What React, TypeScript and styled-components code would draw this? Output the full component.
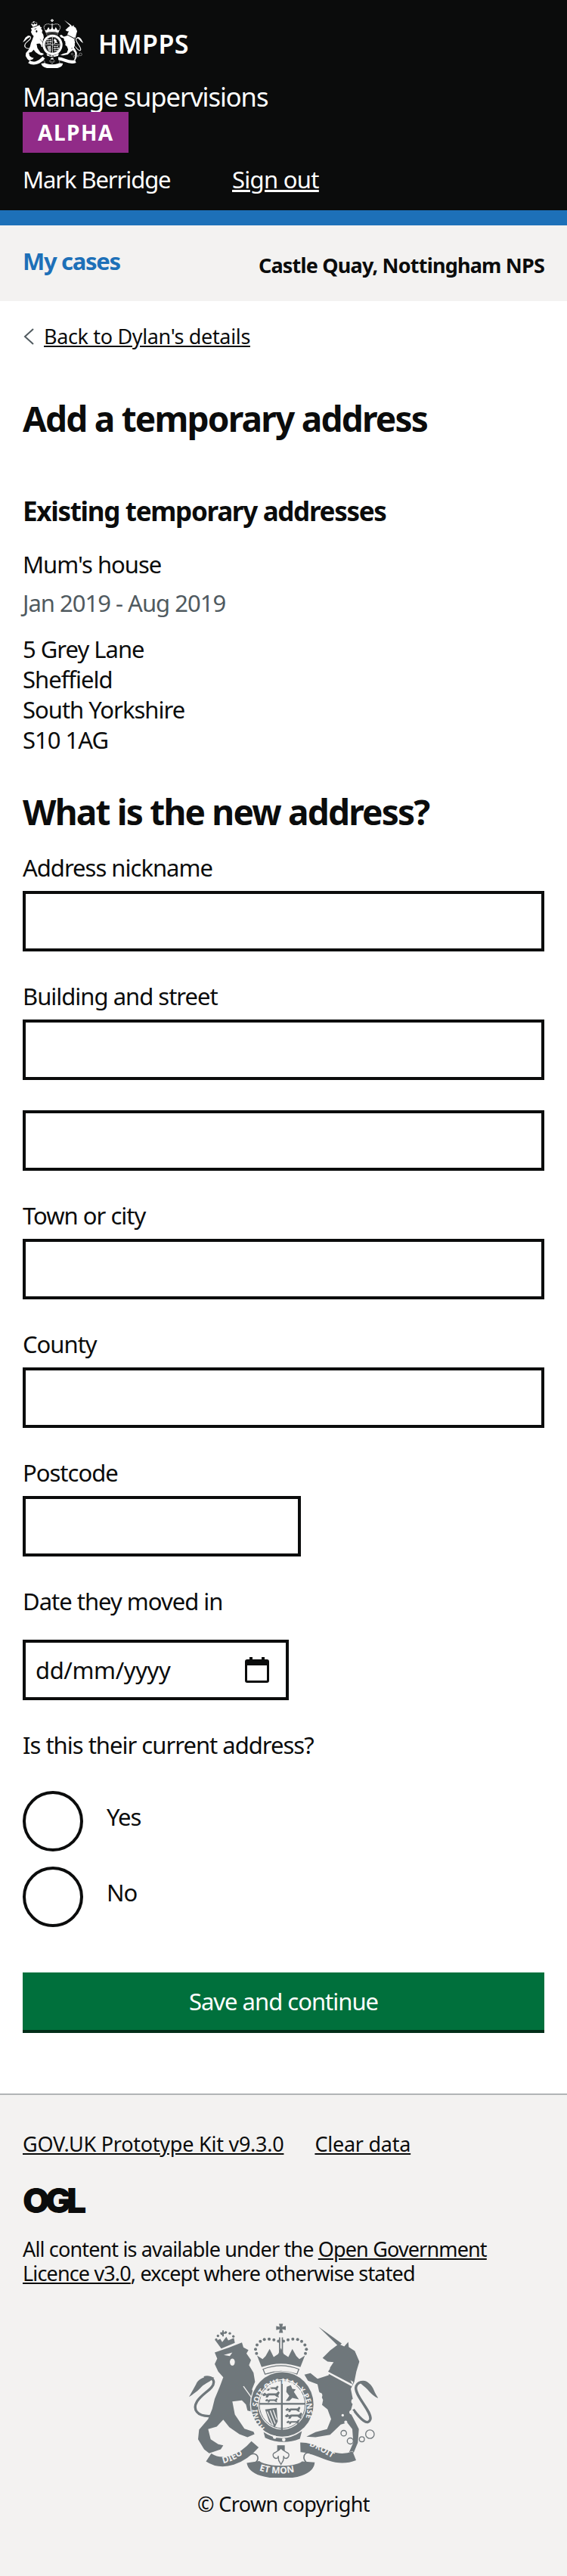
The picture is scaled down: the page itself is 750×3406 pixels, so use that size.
import React from "react";
import styled, { createGlobalStyle } from "styled-components";

const Global = createGlobalStyle`
  html, body { margin: 0; padding: 0; background: #fff; }
  body { font-family: "Noto Sans", "Liberation Sans", sans-serif; color: #0b0c0c; font-size: 31px; line-height: 40px; letter-spacing: -1px; }
  * { box-sizing: border-box; }
`;

const Page = styled.div`
  width: 750px;
  min-height: 3406px;
  display: flex;
  flex-direction: column;
`;

const Header = styled.header`
  background: #0b0c0c;
  color: #fff;
  border-bottom: 20px solid #1d70b8;
  padding: 25px 30px 21px;
`;
const LogoRow = styled.div`
  display: flex;
  align-items: center;
  gap: 20px;
  height: 65px;
`;
const Brand = styled.span`
  font-size: 34px;
  line-height: 40px;
  font-weight: 600;
  letter-spacing: 0.4px;
`;
const ServiceName = styled.div`
  font-size: 34.5px;
  line-height: 40px;
  margin-top: 18px;
  letter-spacing: -1.05px;
`;
const Tag = styled.div`
  display: inline-block;
  background: #912b88;
  color: #fff;
  font-size: 28px;
  font-weight: 700;
  letter-spacing: 1.5px;
  line-height: 54px;
  height: 54px;
  width: 140px;
  padding: 0 0 0 20px;
  vertical-align: top;
`;
const UserRow = styled.div`
  display: flex;
  margin-top: 15px;
`;
const UserName = styled.span`
  width: 277px;
  letter-spacing: -1.1px;
`;
const HeaderLink = styled.a`
  color: #fff;
  text-decoration: underline;
  letter-spacing: -0.7px;
`;

const SubNav = styled.nav`
  background: #f3f2f1;
  height: 100px;
  padding: 27px 30px 0;
  display: flex;
  justify-content: space-between;
  align-items: flex-start;
`;
const NavLink = styled.a`
  color: #1d70b8;
  font-weight: 700;
  letter-spacing: -1.3px;
  text-decoration: none;
`;
const Org = styled.span`
  font-size: 27px;
  line-height: 32px;
  font-weight: 700;
  margin-top: 10px;
  letter-spacing: -0.8px;
`;

const Main = styled.main`
  padding: 31px 30px 0;
`;
const BackRow = styled.div`
  display: flex;
  align-items: center;
  gap: 11px;
  font-size: 27px;
  line-height: 32px;
  letter-spacing: -0.35px;
`;
const TextLink = styled.a`
  color: #0b0c0c;
  text-decoration: underline;
`;
const H1 = styled.h1<{ $top: number }>`
  font-size: 46px;
  line-height: 50px;
  font-weight: 700;
  letter-spacing: -1.8px;
  margin: ${(p) => p.$top}px 0 0;
`;
const H2 = styled.h2`
  font-size: 35px;
  line-height: 40px;
  font-weight: 700;
  letter-spacing: -1.3px;
  margin: 78px 0 0;
`;
const Nickname = styled.p`
  margin: 30px 0 0;
`;
const Dates = styled.p`
  margin: 11px 0 0;
  color: #505a5f;
`;
const AddressBlock = styled.address`
  margin-top: 21px;
  font-style: normal;
`;
const Form = styled.form`
  margin-top: 30px;
`;
const Group = styled.div`
  margin-bottom: 40px;
`;
const Label = styled.label<{ $gap?: number }>`
  display: block;
  line-height: 38px;
  margin-bottom: ${(p) => (p.$gap ?? 10) + 2}px;
`;
const Input = styled.input<{ $w?: number; $gap?: number }>`
  display: block;
  width: ${(p) => (p.$w ? `${p.$w}px` : "100%")};
  height: 80px;
  border: 4px solid #0b0c0c;
  border-radius: 0;
  background: #fff;
  margin: 0 0 ${(p) => p.$gap ?? 0}px;
  padding: 10px;
`;
const DateBox = styled.div`
  width: 352px;
  height: 80px;
  border: 4px solid #0b0c0c;
  display: flex;
  align-items: center;
  justify-content: space-between;
  padding: 0 22px 0 13px;
`;
const DateText = styled.span`
  letter-spacing: -0.4px;
`;
const Radios = styled.div`
  display: flex;
  flex-direction: column;
  gap: 20px;
`;
const RadioRow = styled.label`
  display: flex;
  align-items: flex-start;
  gap: 31px;
  height: 80px;
`;
const RadioDot = styled.input`
  appearance: none;
  width: 80px;
  height: 80px;
  margin: 0;
  border: 4px solid #0b0c0c;
  border-radius: 50%;
  background: #fff;
  flex: none;
`;
const RadioText = styled.span`
  padding-top: 14px;
`;
const SaveButton = styled.button`
  display: block;
  width: 100%;
  height: 80px;
  margin-top: 60px;
  background: #00703c;
  color: #fff;
  border: 0;
  border-bottom: 4px solid #002d18;
  border-radius: 0;
  font: inherit;
  letter-spacing: inherit;
`;

const Footer = styled.footer`
  margin-top: 80px;
  flex: 1;
  background: #f3f2f1;
  border-top: 2px solid #b1b4b6;
  padding: 49px 30px 0;
  font-size: 27px;
  line-height: 32px;
`;
const FooterLinks = styled.div`
  display: flex;
  gap: 41px;
  letter-spacing: -0.25px;
`;
const OglMark = styled.div`
  margin-top: 41px;
  height: 34px;
  line-height: 34px;
  font-family: Inter, "Noto Sans", sans-serif;
  font-weight: 900;
  font-size: 46px;
  letter-spacing: -6px;
`;
const Licence = styled.p`
  margin: 32px 0 0;
  letter-spacing: -0.85px;
`;
const CrestWrap = styled.div`
  display: flex;
  flex-direction: column;
  align-items: center;
  margin-top: 49px;
`;
const Copyright = styled.div`
  margin-top: 19px;
  letter-spacing: -0.6px;
`;
const CrestSvg = styled.svg<{ $ink: string }>`
  display: block;
  color: ${(p) => p.$ink};
  flex: none;
`;
const MottoText = styled.text`
  font-family: "Noto Sans", sans-serif;
  font-weight: 700;
  letter-spacing: 0;
`;

function Passant({ x, y, s = 1, ink }: { x: number; y: number; s?: number; ink: string }) {
  return (
    <path
      transform={`translate(${x} ${y}) scale(${s})`}
      fill={ink}
      d="M0 4 L8 -2 L12 2 L18 0 L40 0 L46 -6 L50 -2 L46 6 L48 12 L42 10 L36 6 L20 6 L16 12 L10 12 L12 6 L4 8 Z"
    />
  );
}

function Crest({ ink, paper, width, height, legends }: { ink: string; paper: string; width: number; height: number; legends: boolean }) {
  const dotsL = [[445, 101], [427, 96], [408, 93], [389, 94], [373, 102], [360, 116], [354, 133], [358, 150]];
  const dotsR = dotsL.map(([x, y]) => [910 - x, y]);
  const rings = [[621, 230, 10], [608, 316, 11], [744, 340, 10], [735, 383, 8], [704, 466, 11], [730, 497, 12], [776, 490, 10], [808, 470, 17]];
  const spots = [[712, 422, 6], [735, 383, 8], [700, 395, 5], [745, 340, 8]];
  return (
    <CrestSvg $ink={ink} width={width} height={height} viewBox="90 30 750 610" fill="currentColor">
      <g>
        {[[198, 95], [205, 80], [220, 72], [236, 66], [252, 70], [266, 82]].map(([x, y], i) => (
          <circle key={i} cx={x} cy={y} r={5} />
        ))}
        <path d="M222 58 h6 v8 h8 v6 h-8 v10 h-6 v-10 h-8 v-6 h8 z" />
        <path d="M196 100 L214 92 L222 105 L238 84 L246 98 L268 88 L272 108 L218 130 Z" />
      </g>
      <path d="M192 146 L250 126 L300 106 L306 126 L326 136 L318 150 L336 176 L328 196 L346 226 L352 262 L340 292 L366 364 L362 386 L322 376 L316 352 L300 336 L262 340 L272 392 L310 448 L346 460 L350 470 L322 482 L290 470 L250 442 L226 412 L200 440 L166 450 L176 490 L206 510 L226 514 L216 530 L170 546 L150 530 L126 490 L130 452 L166 410 L182 370 L192 330 L212 282 L226 244 L206 222 L192 192 L202 170 Z" />
      <path d="M228 156 L262 146 L252 160 Z M262 170 a10 14 0 1 0 .1 0 Z" fill={paper} />
      <path d="M306 280 L362 358" stroke={paper} strokeWidth="4" fill="none" />
      <path d="M178 398 C120 402 104 370 122 340 C145 305 190 290 188 262 C186 245 165 240 150 245" fill="none" stroke="currentColor" strokeWidth="10" />
      <path d="M190 246 C165 232 125 250 118 272 C108 290 100 305 90 322 C112 308 128 296 140 282 C155 268 175 262 190 246 Z" />
      <path d="M604 44 L696 110 L684 122 Z" />
      <path d="M684 112 L706 122 L722 104 L724 124 L748 140 L766 182 L754 222 L746 262 L732 290 L742 340 L730 384 L752 426 L764 450 L760 504 L740 552 L724 544 L742 504 L738 450 L718 424 L692 432 L650 472 L592 482 L556 480 L592 462 L638 450 L654 410 L640 372 L618 354 L622 334 L606 300 L600 272 L562 258 L548 234 L572 228 L600 250 L644 236 L650 205 L664 184 L640 182 L620 168 L650 138 Z" />
      <path d="M642 206 L742 262 L736 280 L636 226 Z" fill={paper} />
      <path d="M650 210 L660 200 L668 218 L680 208 L688 230 L700 222 L708 242 L720 236 L732 258 L738 272 L642 222 Z" />
      <path d="M742 372 C770 410 800 440 810 410 C815 380 750 320 752 286 C756 258 790 258 800 272" fill="none" stroke="currentColor" strokeWidth="10" />
      <path d="M765 262 C790 252 815 270 824 296 C830 310 836 320 842 328 C820 318 808 304 798 292 C788 282 776 274 765 262 Z" />
      {rings.map(([x, y, r], i) => (
        <circle key={i} cx={x} cy={y} r={r} fill={i < 4 ? paper : "none"} stroke={i < 4 ? "none" : "currentColor"} strokeWidth="4" />
      ))}
      {spots.map(([x, y, r], i) => (
        <circle key={i} cx={x} cy={y} r={r} fill={paper} />
      ))}
      <path d="M447 32 h16 l-3 12 l14 -3 v16 l-14 -3 l3 14 h-16 l3 -14 l-14 3 v-16 l14 3 z" />
      <rect x="447" y="86" width="5" height="60" />
      <rect x="458" y="86" width="5" height="60" />
      {dotsL.concat(dotsR).map(([x, y], i) => (
        <circle key={i} cx={x} cy={y} r={6} />
      ))}
      <path d="M360 158 L382 172 L394 160 L410 132 L426 164 L444 152 L455 128 L466 152 L484 164 L500 132 L516 160 L528 172 L550 158 L532 204 Q455 176 378 204 Z" />
      <path d="M384 212 Q455 184 526 212 L518 232 Q455 210 392 232 Z" fill={paper} stroke="currentColor" strokeWidth="4" />
      <ellipse cx="460" cy="352" rx="128" ry="132" fill={paper} />
      <ellipse cx="460" cy="352" rx="124" ry="128" />
      <ellipse cx="460" cy="352" rx="96" ry="100" fill={paper} />
      <ellipse cx="460" cy="352" rx="91" ry="95" fill="none" stroke="currentColor" strokeWidth="3" />
      <rect x="455" y="256" width="7" height="208" />
      <rect x="368" y="346" width="184" height="7" />
      <Passant x={388} y={284} s={1.15} ink={ink} />
      <Passant x={380} y={308} s={1.4} ink={ink} />
      <Passant x={392} y={332} s={1} ink={ink} />
      <path d="M478 282 L494 276 L500 290 L514 292 L506 302 L526 332 L500 326 L488 338 L474 338 L488 318 L476 302 Z" />
      <path d="M392 372 L438 366 L442 420 L430 444 L408 420 Z" />
      <path d="M400 380 L424 436 M412 376 L432 428 M424 374 L438 412" stroke={paper} strokeWidth="4" fill="none" />
      <Passant x={472} y={368} s={1.2} ink={ink} />
      <Passant x={470} y={392} s={1.4} ink={ink} />
      <Passant x={476} y={418} s={1.05} ink={ink} />
      {legends && (
        <>
          <path id="garter" d="M392 446 A98 102 0 1 1 534 440" fill="none" />
          <MottoText fontSize="30" fill={paper} letterSpacing="0.6">
            <textPath href="#garter" startOffset="0">HONI SOIT QUI MAL Y PENSE</textPath>
          </MottoText>
        </>
      )}
      <path d="M386 462 Q460 512 538 458 L530 488 Q460 516 392 484 Z" />
      <circle cx="430" cy="482" r="7" fill={paper} />
      <circle cx="466" cy="492" r="7" fill={paper} />
      <path d="M168 562 C225 600 300 570 352 510" fill="none" stroke={paper} strokeWidth="46" />
      <path d="M168 562 C225 600 300 570 352 510" fill="none" stroke="currentColor" strokeWidth="38" />
      <path d="M342 580 C352 640 562 640 566 580" fill="none" stroke={paper} strokeWidth="58" />
      <path d="M344 580 C352 634 560 634 564 580" fill="none" stroke="currentColor" strokeWidth="50" />
      <path d="M528 526 C600 520 660 590 748 558" fill="none" stroke={paper} strokeWidth="46" />
      <path d="M532 522 C600 520 660 590 746 556" fill="none" stroke="currentColor" strokeWidth="38" />
      <path d="M330 552 C360 535 380 570 345 590 M576 548 C548 530 530 570 566 590" fill="none" stroke="currentColor" strokeWidth="5" />
      {legends && (
        <>
          <path id="dieuText" d="M226 586 C270 576 310 550 340 516" fill="none" />
          <MottoText fontSize="36" fill={paper}>
            <textPath href="#dieuText">DIEU</textPath>
          </MottoText>
          <path id="monText" d="M368 614 Q455 640 542 610" fill="none" />
          <MottoText fontSize="36" fill={paper} letterSpacing="1">
            <textPath href="#monText">ET MON</textPath>
          </MottoText>
          <path id="droitText" d="M566 516 C610 530 650 565 690 582" fill="none" />
          <MottoText fontSize="33" fill={paper}>
            <textPath href="#droitText">DROIT</textPath>
          </MottoText>
        </>
      )}
      <rect x="440" y="514" width="30" height="22" />
      <path d="M455 526 C438 546 420 540 424 556 C430 572 446 566 444 556 L446 574 L455 590 L464 574 L466 556 C464 566 480 572 486 556 C490 540 472 546 455 526 Z" fill={paper} stroke="currentColor" strokeWidth="4" />
    </CrestSvg>
  );
}

export default function App() {
  return (
    <Page>
      <Global />
      <Header>
        <LogoRow>
          <Crest ink="#fff" paper="#0b0c0c" width={80} height={65} legends={false} />
          <Brand>HMPPS</Brand>
        </LogoRow>
        <ServiceName>Manage supervisions</ServiceName>
        <Tag>ALPHA</Tag>
        <UserRow>
          <UserName>Mark Berridge</UserName>
          <HeaderLink href="#">Sign out</HeaderLink>
        </UserRow>
      </Header>
      <SubNav>
        <NavLink href="#">My cases</NavLink>
        <Org>Castle Quay, Nottingham NPS</Org>
      </SubNav>
      <Main>
        <BackRow>
          <svg width="17" height="24" viewBox="0 0 17 24" style={{ flex: "none" }}>
            <path d="M14 2 L3 12 L14 22" fill="none" stroke="#505a5f" strokeWidth="2" />
          </svg>
          <TextLink href="#">Back to Dylan's details</TextLink>
        </BackRow>
        <H1 $top={67}>Add a temporary address</H1>
        <H2>Existing temporary addresses</H2>
        <Nickname>Mum's house</Nickname>
        <Dates>Jan 2019 - Aug 2019</Dates>
        <AddressBlock>
          5 Grey Lane
          <br />
          Sheffield
          <br />
          South Yorkshire
          <br />
          S10 1AG
        </AddressBlock>
        <H1 $top={50}>What is the new address?</H1>
        <Form>
          <Group>
            <Label>Address nickname</Label>
            <Input type="text" />
          </Group>
          <Group>
            <Label>Building and street</Label>
            <Input type="text" $gap={40} />
            <Input type="text" />
          </Group>
          <Group>
            <Label>Town or city</Label>
            <Input type="text" />
          </Group>
          <Group>
            <Label>County</Label>
            <Input type="text" />
          </Group>
          <Group>
            <Label>Postcode</Label>
            <Input type="text" $w={368} />
          </Group>
          <Group>
            <Label $gap={30}>Date they moved in</Label>
            <DateBox>
              <DateText>dd/mm/yyyy</DateText>
              <svg width="32" height="34" viewBox="0 0 32 34">
                <path
                  fill="#0b0c0c"
                  fillRule="evenodd"
                  d="M6 0h4v3h12V0h4v3h3a3 3 0 0 1 3 3v25a3 3 0 0 1-3 3H3a3 3 0 0 1-3-3V6a3 3 0 0 1 3-3h3V0zM3 11v20h26V11H3z"
                />
              </svg>
            </DateBox>
          </Group>
          <Label $gap={40}>Is this their current address?</Label>
          <Radios>
            <RadioRow>
              <RadioDot type="radio" name="current" />
              <RadioText>Yes</RadioText>
            </RadioRow>
            <RadioRow>
              <RadioDot type="radio" name="current" />
              <RadioText>No</RadioText>
            </RadioRow>
          </Radios>
          <SaveButton type="button">Save and continue</SaveButton>
        </Form>
      </Main>
      <Footer>
        <FooterLinks>
          <TextLink href="#">GOV.UK Prototype Kit v9.3.0</TextLink>
          <TextLink href="#">Clear data</TextLink>
        </FooterLinks>
        <OglMark>OGL</OglMark>
        <Licence>
          All content is available under the <TextLink href="#">Open Government Licence v3.0</TextLink>, except where otherwise stated
        </Licence>
        <CrestWrap>
          <Crest ink="#6f777b" paper="#f3f2f1" width={250} height={205} legends />
          <Copyright>© Crown copyright</Copyright>
        </CrestWrap>
      </Footer>
    </Page>
  );
}
